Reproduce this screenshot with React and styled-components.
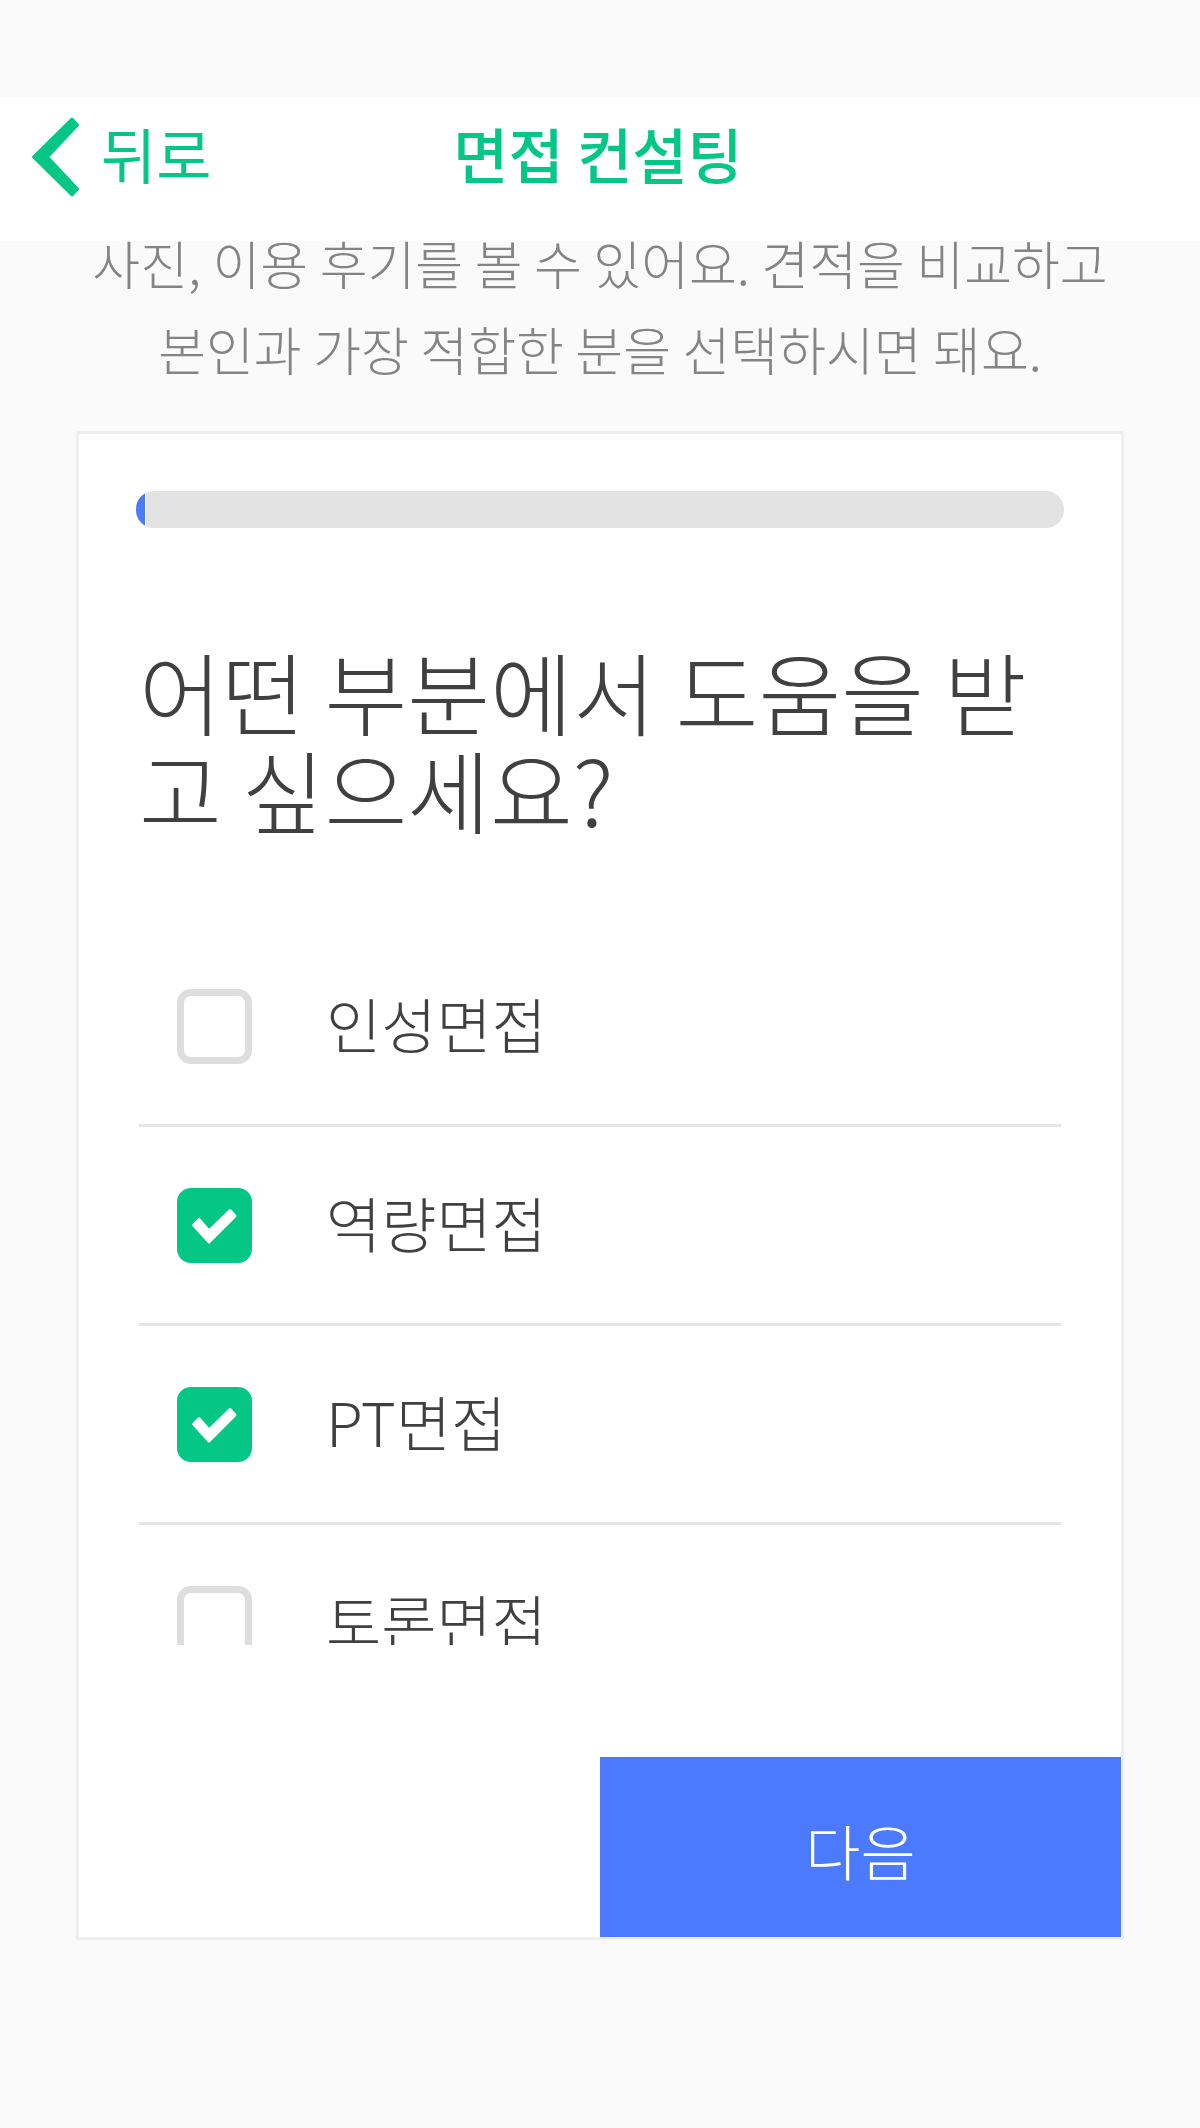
import React, { useState } from 'react';
import styled, { createGlobalStyle } from 'styled-components';

const GlobalStyle = createGlobalStyle`
  * {
    box-sizing: border-box;
  }

  body {
    margin: 0;
    background: #fafafa;
    font-family: 'Noto Sans CJK KR', sans-serif;
    font-weight: 300;
  }
`;

const Screen = styled.div`
  display: flex;
  flex-direction: column;
  min-height: 100vh;
  padding-top: 97px;
`;

const NavBar = styled.header`
  display: grid;
  grid-template-columns: 1fr auto 1fr;
  align-items: start;
  height: 144px;
  padding: 20px 36px 0 32px;
  background: #fff;
  color: #04c785;
`;

const BackButton = styled.button`
  display: flex;
  align-items: flex-start;
  justify-self: start;
  gap: 20px;
  padding: 0;
  border: 0;
  background: none;
  color: inherit;
  font: inherit;
  font-size: 60px;
  font-weight: 400;
  line-height: 72px;
  cursor: pointer;
`;

const NavTitle = styled.h1`
  margin: 0;
  font-size: 60px;
  font-weight: 500;
  line-height: 72px;
`;

const Intro = styled.div`
  display: flex;
  flex-direction: column;
  justify-content: flex-end;
  height: 151px;
  overflow: hidden;
`;

const IntroText = styled.p`
  margin: 0;
  color: #848484;
  font-size: 52px;
  line-height: 86px;
  text-align: center;
  word-break: keep-all;
`;

const Card = styled.form`
  display: flex;
  flex-direction: column;
  margin: 39px 76px 0;
  border: 3px solid #eee;
  background: #fff;
`;

const Progress = styled.div`
  height: 37px;
  margin: 57px 57px 0;
  border-radius: 18px;
  background: #e3e3e3;
  overflow: hidden;
`;

const ProgressFill = styled.div`
  box-sizing: content-box;
  height: 100%;
  border-right: 1px solid #fff;
  background: #4b7bfc;
`;

const Question = styled.h2`
  margin: 113px 60px 91px;
  color: #404040;
  font-size: 90px;
  font-weight: 300;
  line-height: 98px;
  word-break: break-all;
`;

const OptionList = styled.ul`
  height: 717px;
  margin: 0 60px 112px;
  padding: 0;
  list-style: none;
  overflow: hidden auto;
  scrollbar-width: none;
`;

const OptionRow = styled.li`
  border-bottom: 3px solid #e6e6e6;
`;

const OptionLabel = styled.label`
  display: flex;
  align-items: center;
  gap: 74px;
  height: 196px;
  padding: 0 38px;
  cursor: pointer;
`;

const OptionName = styled.span`
  padding-bottom: 6px;
  color: #404040;
  font-size: 60px;
  line-height: 80px;
`;

const CheckWrap = styled.span`
  display: grid;
  flex: none;
  width: 75px;
  height: 75px;

  > * {
    grid-area: 1 / 1;
  }
`;

const CheckInput = styled.input`
  width: 100%;
  height: 100%;
  margin: 0;
  appearance: none;
  border: 7px solid #dedede;
  border-radius: 14px;
  background: #fff;
  cursor: pointer;

  &:checked {
    border-color: #04c785;
    background: #04c785;
  }
`;

const CheckMark = styled.svg`
  width: 75px;
  height: 75px;
  pointer-events: none;
`;

const NextButton = styled.button`
  align-self: flex-end;
  width: 50%;
  height: 180px;
  padding: 4px 0 0;
  border: 0;
  background: #4b7bfc;
  color: #fff;
  font: inherit;
  font-size: 60px;
  cursor: pointer;
`;

const options = ['인성면접', '역량면접', 'PT면접', '토론면접'];

const BackIcon = () => (
  <svg width="49" height="80" viewBox="0 0 49 80" aria-hidden="true">
    <path
      d="M40 2 L45.5 8 L15.5 40 L45.5 72 L40 78 L1.5 40 Z"
      fill="currentColor"
      stroke="currentColor"
      strokeWidth="3"
      strokeLinejoin="round"
    />
  </svg>
);

const Option = ({ name, checked, onChange }) => {
  return (
    <OptionRow>
      <OptionLabel>
        <CheckWrap>
          <CheckInput type="checkbox" checked={checked} onChange={onChange} />
          {checked && (
            <CheckMark viewBox="0 0 75 75" aria-hidden="true">
              <path
                d="M16.5 37 L22 31.5 L32 43 L53 22.5 L58 28 L32 54 Z"
                fill="#fff"
                stroke="#fff"
                strokeWidth="3"
                strokeLinejoin="round"
              />
            </CheckMark>
          )}
        </CheckWrap>
        <OptionName>{name}</OptionName>
      </OptionLabel>
    </OptionRow>
  );
};

const App = () => {
  const [selected, setSelected] = useState(['역량면접', 'PT면접']);
  const percent = 1;

  const toggle = name => {
    setSelected(
      selected.includes(name)
        ? selected.filter(item => item !== name)
        : [...selected, name]
    );
  };

  return (
    <Screen>
      <GlobalStyle />
      <NavBar>
        <BackButton type="button">
          <BackIcon />
          뒤로
        </BackButton>
        <NavTitle>면접 컨설팅</NavTitle>
      </NavBar>

      <Intro>
        <IntroText>
          사진, 이용 후기를 볼 수 있어요. 견적을 비교하고
          <br />
          본인과 가장 적합한 분을 선택하시면 돼요.
        </IntroText>
      </Intro>

      <Card onSubmit={e => e.preventDefault()}>
        <Progress>
          <ProgressFill style={{ width: `${percent}%` }} />
        </Progress>
        <Question>어떤 부분에서 도움을 받고 싶으세요?</Question>
        <OptionList>
          {options.map(name => (
            <Option
              key={name}
              name={name}
              checked={selected.includes(name)}
              onChange={() => toggle(name)}
            />
          ))}
        </OptionList>
        <NextButton type="submit">다음</NextButton>
      </Card>
    </Screen>
  );
};

export default App;
